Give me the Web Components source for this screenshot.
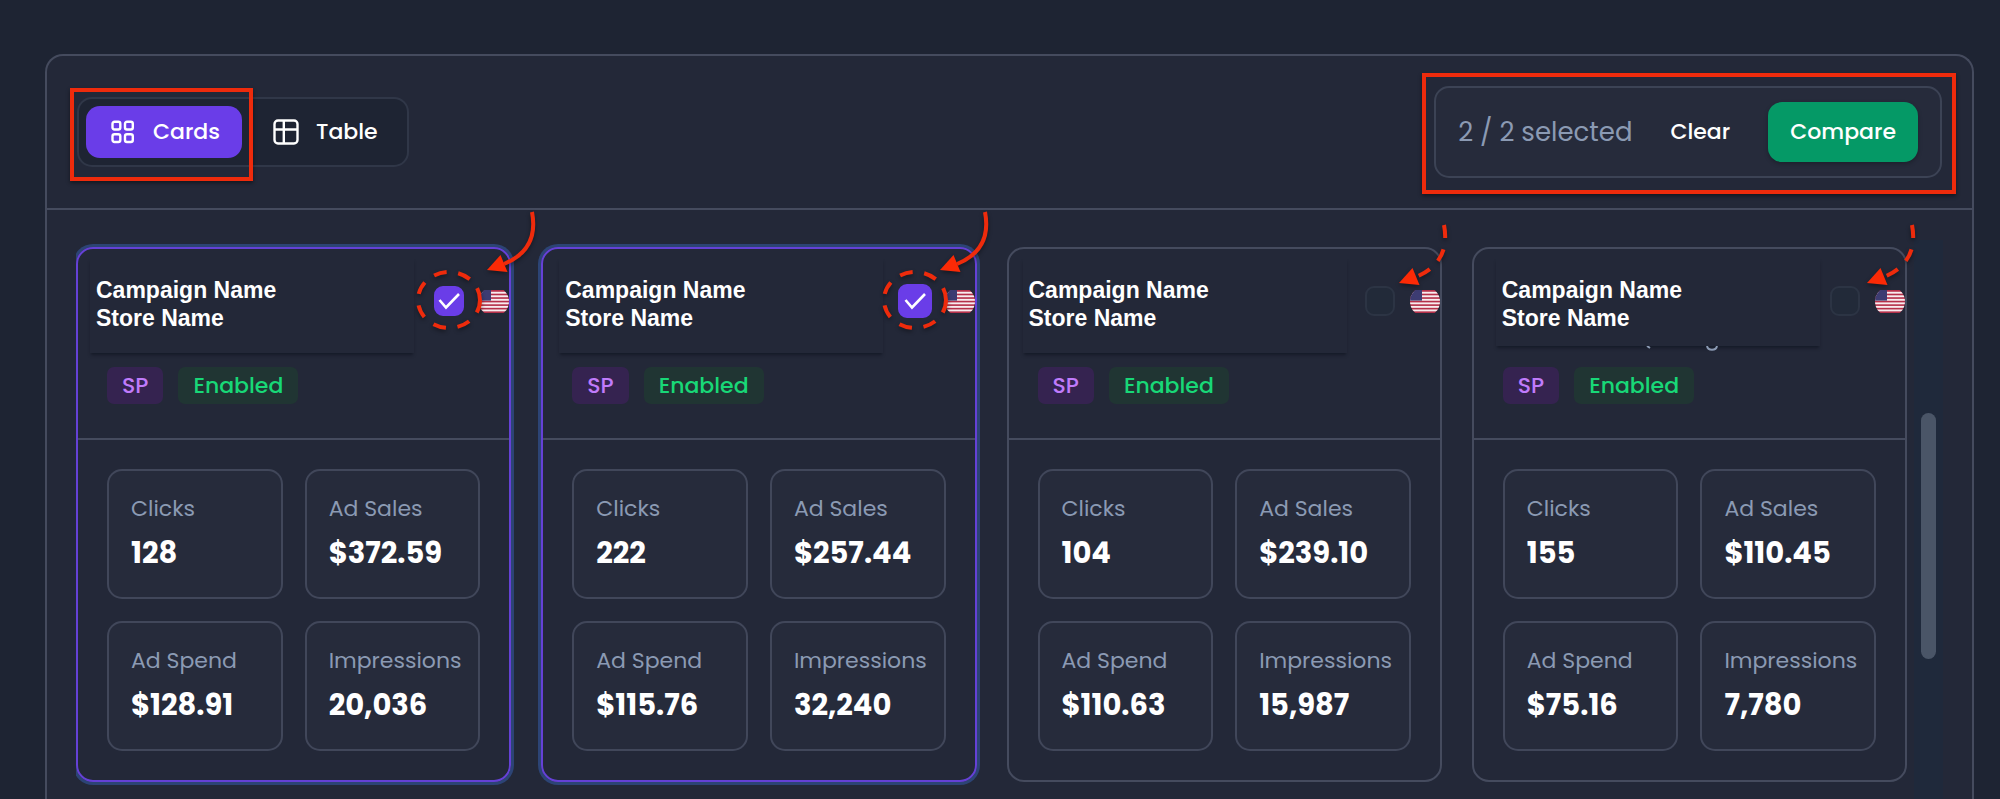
<!DOCTYPE html>
<html lang="en">
<head>
<meta charset="utf-8">
<title>Campaigns</title>
<style>
  html {
    background: #1e2433;
  }

  body {
    --panel: #232838;
    --tile: #262b3b;
    --line: #454b5e;
    --muted: #8b9ab3;
    --accent: #6a3de8;
    --mark: #ee2b0c;

    box-sizing: border-box;
    display: flex;
    flex-direction: column;
    height: 100vh;
    margin: 0;
    padding: 54px 26px 0 45px;
    overflow: hidden;
    color: #fff;
    font-family: "Poppins", "Inter", sans-serif;
    font-size: 22px;
    line-height: 32px;
  }
</style>
</head>
<body>
<campaign-panel>
  <view-toggle slot="toolbar"></view-toggle>
  <compare-bar slot="toolbar" count="2" max="2"></compare-bar>

  <campaign-card selected style="--plate-x: 12px; --arrow-x: 402px"
    clicks="128" sales="$372.59" spend="$128.91" impressions="20,036">
    <span slot="campaign">Campaign Name</span>
    <span slot="store">Store Name</span>
  </campaign-card>
  <campaign-card selected style="--plate-x: 16px; --arrow-x: 390px; --tick: 34px"
    clicks="222" sales="$257.44" spend="$115.76" impressions="32,240">
    <span slot="campaign">Campaign Name</span>
    <span slot="store">Store Name</span>
  </campaign-card>
  <campaign-card style="--plate-x: 14px; --arrow-x: 383px; --arrow-y: -31px"
    clicks="104" sales="$239.10" spend="$110.63" impressions="15,987">
    <span slot="campaign">Campaign Name</span>
    <span slot="store">Store Name</span>
  </campaign-card>
  <campaign-card remnant style="--plate-x: 22px; --plate-h: 88px; --arrow-x: 386px; --arrow-y: -31px"
    clicks="155" sales="$110.45" spend="$75.16" impressions="7,780">
    <span slot="campaign">Campaign Name</span>
    <span slot="store">Store Name</span>
  </campaign-card>
</campaign-panel>

<script>
  class CampaignPanel extends HTMLElement {
    constructor() {
      super();
      this.attachShadow({ mode: "open" });
      this.shadowRoot.innerHTML = `
        <style>
          :host {
            display: flex;
            flex: 1;
            flex-direction: column;
            min-height: 0;
            border: 2px solid var(--line);
            border-bottom: none;
            border-radius: 18px 18px 0 0;
            background: var(--panel);
          }

          header {
            display: flex;
            align-items: center;
            justify-content: space-between;
            padding: 30px;
            border-bottom: 2px solid var(--line);
          }

          .scroller {
            display: flex;
            flex: 1;
            gap: 7px;
            min-height: 0;
            margin: 30px 29px 0;
            clip-path: inset(-40px 0 0 0);
          }

          .grid {
            display: grid;
            grid-template-columns: repeat(4, 1fr);
            gap: 30px;
            align-items: start;
            flex: 1;
            padding-top: 7px;
          }

          .track {
            width: 29px;
            background: #1f293b;
          }

          .thumb {
            width: 15px;
            height: 246px;
            margin: 173px auto 0;
            border-radius: 8px;
            background: #4a5567;
          }
        </style>

        <header><slot name="toolbar"></slot></header>
        <div class="scroller">
          <div class="grid"><slot></slot></div>
          <div class="track"><div class="thumb"></div></div>
        </div>
      `;
    }
  }

  class MarkBox extends HTMLElement {
    constructor() {
      super();
      this.attachShadow({ mode: "open" });
      this.shadowRoot.innerHTML = `
        <style>
          :host {
            position: absolute;
            box-sizing: border-box;
            border: 4px solid var(--mark);
            box-shadow: 0 2px 4px rgba(0, 0, 0, 0.45);
            pointer-events: none;
          }
        </style>
      `;
    }
  }

  class ViewToggle extends HTMLElement {
    constructor() {
      super();
      this.attachShadow({ mode: "open" });
      this.shadowRoot.innerHTML = `
        <style>
          :host {
            position: relative;
            display: flex;
            gap: 7px;
            padding: 7px;
            border: 2px solid #303748;
            border-radius: 15px;
            background: #1e2433;
          }

          button {
            display: flex;
            align-items: center;
            gap: 15px;
            height: 52px;
            padding: 0 22px;
            border: none;
            border-radius: 14px;
            background: none;
            color: inherit;
            font: inherit;
            font-weight: 500;
            cursor: pointer;
          }

          button.active {
            background: var(--accent);
          }

          svg {
            width: 30px;
            height: 30px;
            fill: none;
            stroke: currentColor;
            stroke-width: 2.4;
          }

          mark-box {
            inset: -11px auto -16px -9px;
            width: 183px;
          }
        </style>

        <button class="active" aria-pressed="true">
          <svg viewBox="0 0 30 30" aria-hidden="true">
            <rect x="4.500" y="4.7" width="7.8" height="7.8" rx="2"/>
            <rect x="17" y="4.7" width="7.8" height="7.8" rx="2"/>
            <rect x="4.500" y="17.2" width="7.8" height="7.8" rx="2"/>
            <rect x="17" y="17.2" width="7.8" height="7.8" rx="2"/>
          </svg>
          Cards
        </button>
        <button aria-pressed="false">
          <svg viewBox="0 0 30 30" aria-hidden="true">
            <rect x="3.5" y="3.5" width="23" height="23" rx="3.5"/>
            <path d="M3.5 12.5h23M12.8 3.5v23"/>
          </svg>
          Table
        </button>
        <mark-box></mark-box>
      `;
    }
  }

  class CompareBar extends HTMLElement {
    connectedCallback() {
      if (this.shadowRoot) return;
      this.attachShadow({ mode: "open" });
      this.shadowRoot.innerHTML = `
        <style>
          :host {
            position: relative;
            display: flex;
            align-items: center;
            gap: 16px;
            padding: 14px 22px;
            border: 2px solid #3c4355;
            border-radius: 15px;
            background: var(--tile);
          }

          .count {
            color: var(--muted);
            font-size: 26px;
          }

          button {
            height: 60px;
            padding: 0 22px;
            border: none;
            border-radius: 14px;
            background: none;
            color: inherit;
            font: inherit;
            font-weight: 500;
            cursor: pointer;
          }

          .compare {
            background: #059966;
            box-shadow: 0 2px 4px rgba(0, 0, 0, 0.25);
          }

          mark-box {
            inset: -15px -16px -18px -14px;
          }
        </style>

        <span class="count">${this.getAttribute("count")} / ${this.getAttribute("max")} selected</span>
        <button class="clear">Clear</button>
        <button class="compare">Compare</button>
        <mark-box></mark-box>
      `;
    }
  }

  class StatTile extends HTMLElement {
    constructor() {
      super();
      this.attachShadow({ mode: "open" });
      this.shadowRoot.innerHTML = `
        <style>
          :host {
            display: flex;
            flex-direction: column;
            gap: 6px;
            min-width: 0;
            padding: 22px;
            border: 2px solid #41475a;
            border-radius: 15px;
            background: var(--tile);
            white-space: nowrap;
          }

          .label {
            color: var(--muted);
          }

          .value {
            font-size: 29px;
            font-weight: 700;
            line-height: 44px;
          }
        </style>

        <span class="label"><slot name="label"></slot></span>
        <span class="value"><slot></slot></span>
      `;
    }
  }

  class UsFlag extends HTMLElement {
    constructor() {
      super();
      this.attachShadow({ mode: "open" });

      let stripes = "";
      for (let i = 1; i < 13; i += 2) {
        stripes += `<rect y="${i * 1.77}" width="30" height="1.9"/>`;
      }

      this.shadowRoot.innerHTML = `
        <style>
          :host {
            display: block;
            width: 30px;
            height: 23px;
          }

          svg {
            display: block;
          }
        </style>

        <svg width="30" height="23" viewBox="0 0 30 23" role="img">
          <clipPath id="round"><circle cx="15" cy="11.5" r="15"/></clipPath>
          <g clip-path="url(#round)">
            <rect width="30" height="23" fill="#b5304a"/>
            <g fill="#f8ecef">${stripes}</g>
            <rect width="12" height="10.6" fill="#3d3c72"/>
          </g>
        </svg>
      `;
    }
  }

  class CampaignCard extends HTMLElement {
    connectedCallback() {
      if (this.shadowRoot) return;
      this.attachShadow({ mode: "open" });

      const selected = this.hasAttribute("selected");
      this.shadowRoot.innerHTML = `
        <style>
          :host {
            position: relative;
            display: block;
            min-width: 0;
            border: 2px solid var(--line);
            border-radius: 17px;
          }

          :host([selected]) {
            border-color: #6541d6;
            box-shadow: 0 0 0 3px #2c4475;
          }

          .head {
            padding: 9px 0 34px;
            border-bottom: 2px solid var(--line);
          }

          .top {
            display: flex;
            align-items: flex-start;
            justify-content: space-between;
            height: 95px;
          }

          .plate {
            position: relative;
            box-sizing: border-box;
            width: 324px;
            height: var(--plate-h, 95px);
            margin-left: var(--plate-x);
            padding: 18px 6px 0;
            box-shadow: 0 3px 3px -1px rgba(12, 16, 28, 0.6);
            font: bold 23px/28px "Helvetica Neue", "Liberation Sans", Arial, sans-serif;
          }

          .plate span {
            display: block;
          }

          .remnant {
            position: absolute;
            top: 100%;
            left: 150px;
          }

          .actions {
            display: flex;
            align-items: center;
            gap: 13px;
            height: 34px;
            padding-top: 26px;
          }

          .pick {
            position: relative;
            display: grid;
            place-items: center;
            width: 34px;
            height: 34px;
          }

          .pick > * {
            grid-area: 1 / 1;
          }

          input {
            appearance: none;
            box-sizing: border-box;
            width: var(--tick, 30px);
            height: var(--tick, 30px);
            margin: 0;
            border: 2px solid #2c3444;
            border-radius: 9px;
            background: #222a39;
          }

          input:checked {
            border-color: var(--accent);
            background: var(--accent);
          }

          .check {
            z-index: 1;
            pointer-events: none;
          }

          input:not(:checked) + .check {
            display: none;
          }

          .ring,
          .arrow {
            position: absolute;
            z-index: 2;
            overflow: visible;
            pointer-events: none;
            fill: none;
            stroke: var(--mark);
            stroke-width: 4;
            filter: drop-shadow(0 2px 2px rgba(0, 0, 0, 0.4));
          }

          .ring {
            inset: -16px -18px;
          }

          .arrow {
            top: var(--arrow-y, -44px);
            left: var(--arrow-x);
          }

          .badges {
            display: flex;
            gap: 15px;
            padding: 14px 29px 0;
          }

          .badge {
            padding: 0 15px;
            border-radius: 7px;
            font-weight: 500;
            line-height: 37px;
          }

          .type {
            background: #352350;
            color: #c07bfb;
          }

          .status {
            background: #203533;
            color: #18d877;
          }

          .stats {
            display: grid;
            grid-template-columns: 1fr 1fr;
            gap: 22px;
            padding: 29px;
          }
        </style>

        <div class="head">
          <div class="top">
            <div class="plate">
              <span><slot name="campaign"></slot></span>
              <span><slot name="store"></slot></span>
              ${this.hasAttribute("remnant") ? `
              <svg class="remnant" width="72" height="7" viewBox="0 0 72 7" fill="none" stroke="#8b9ab3" stroke-width="2" aria-hidden="true">
                <path d="M1 0l3 2M61 0c1 5 9 5 10 0"/>
              </svg>` : ""}
            </div>
            <div class="actions">
              <label class="pick">
                <input type="checkbox" aria-label="Select campaign" ${selected ? "checked" : ""}>
                <svg class="check" width="30" height="30" viewBox="0 0 30 30" fill="none" stroke="#fff" stroke-width="2.6" aria-hidden="true">
                  <path d="M5.5 14l6.5 7.5L25 8"/>
                </svg>
                ${selected ? `
                <svg class="ring" width="70" height="66" viewBox="0 0 70 66" aria-hidden="true">
                  <ellipse cx="35" cy="32" rx="31" ry="28" stroke-dasharray="13 11.7"/>
                </svg>` : ""}
              </label>
              <us-flag></us-flag>
            </div>
          </div>
          <div class="badges">
            <span class="badge type">SP</span>
            <span class="badge status">Enabled</span>
          </div>
        </div>
        <div class="stats">
          <stat-tile><span slot="label">Clicks</span>${this.getAttribute("clicks")}</stat-tile>
          <stat-tile><span slot="label">Ad Sales</span>${this.getAttribute("sales")}</stat-tile>
          <stat-tile><span slot="label">Ad Spend</span>${this.getAttribute("spend")}</stat-tile>
          <stat-tile><span slot="label">Impressions</span>${this.getAttribute("impressions")}</stat-tile>
        </div>
        <svg class="arrow" width="60" height="75" viewBox="0 0 60 75" aria-hidden="true">
          <path d="M52 7C57 33 46 50 24 59" ${selected ? "" : 'stroke-dasharray="13 11.5"'}/>
          <path d="M7 65L20.5 50 27.5 67z" fill="#fb2a06" stroke="none"/>
        </svg>
      `;
    }
  }

  customElements.define("mark-box", MarkBox);
  customElements.define("campaign-panel", CampaignPanel);
  customElements.define("view-toggle", ViewToggle);
  customElements.define("compare-bar", CompareBar);
  customElements.define("stat-tile", StatTile);
  customElements.define("us-flag", UsFlag);
  customElements.define("campaign-card", CampaignCard);
</script>
</body>
</html>
